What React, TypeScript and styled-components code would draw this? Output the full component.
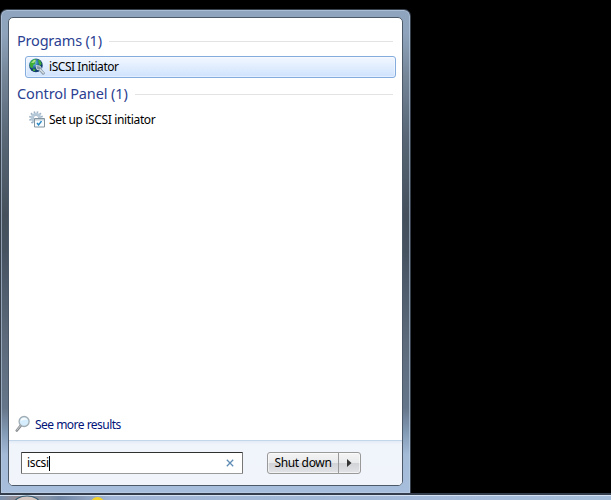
import React from "react";
import styled, { createGlobalStyle } from "styled-components";

const Global = createGlobalStyle`
  * { box-sizing: border-box; }
  html, body { margin: 0; background: #000; overflow: hidden; }
  body { font-family: "Noto Sans", "Open Sans", sans-serif; font-size: 12px; color: #000; }
`;

const Desktop = styled.div`
  width: 611px;
  height: 500px;
  padding-top: 9px;
  display: flex;
  flex-direction: column;
  background: #000;
`;

const MenuFrame = styled.div`
  width: 411px;
  height: 484px;
  padding: 7px 7px 6px;
  border: 1px solid #36404c;
  border-bottom: 0;
  border-radius: 7px 7px 0 0;
  box-shadow: inset 0 0 0 1px rgba(190, 207, 226, .6);
  background: linear-gradient(#8fa5bf 0, #8ea3bb 24px, #758699 65px, #596776 125px, #45505c 205px, #465260 240px, #5c6a7b 330px, #66768a 398px, #829ab4 422px, #a3bbd7 445px, #a7bfdc 100%);
`;

const MenuPanel = styled.div`
  height: 469px;
  display: flex;
  flex-direction: column;
  overflow: hidden;
  border: 1px solid #4c5968;
  border-radius: 5px;
  background: #fff;
`;

const Results = styled.main`
  height: 422px;
  padding: 13px 7px 0 8px;
  display: flex;
  flex-direction: column;
`;

const GroupHeading = styled.h2<{ $spacing: string }>`
  height: 20px;
  margin: 0;
  padding-right: 2px;
  display: flex;
  align-items: center;
  gap: 7px;
  color: #2c3f92;
  font-size: 14.5px;
  font-weight: 400;
  line-height: 20px;
  letter-spacing: ${(p) => p.$spacing};
  white-space: nowrap;
  &::after { content: ""; flex: 1; height: 1px; background: #e2e3e5; }
`;

const HeadingText = styled.span`
  height: 20px;
  margin-top: -2px;
`;

const ResultItem = styled.div<{ $selected?: boolean; $spacing: string }>`
  width: 371px;
  height: 22px;
  margin: 5px 0 6px 8px;
  padding-left: 3px;
  display: flex;
  align-items: center;
  gap: 4px;
  line-height: 18px;
  letter-spacing: ${(p) => p.$spacing};
  white-space: nowrap;
  border: 1px solid ${(p) => (p.$selected ? "#84acdd" : "transparent")};
  border-radius: 3px;
  background: ${(p) => (p.$selected ? "linear-gradient(#f2f7ff, #cfe3fd)" : "none")};
  box-shadow: ${(p) => (p.$selected ? "inset 0 0 0 1px rgba(255,255,255,.4)" : "none")};
`;

const MoreLink = styled.div`
  height: 20px;
  margin: auto 0 6px -2px;
  display: flex;
  align-items: center;
  gap: 4px;
  color: #00147a;
  letter-spacing: -0.52px;
`;

const Footer = styled.footer`
  flex: 1;
  padding: 11px 0 0 12px;
  display: flex;
  align-items: flex-start;
  gap: 24px;
  border-top: 1px solid #c4d6e9;
  background: linear-gradient(#e2eaf5 0, #f0f4fb 3px, #f1f4fb 100%);
`;

const SearchBox = styled.div`
  width: 222px;
  height: 22px;
  padding: 0 8px 0 5px;
  display: flex;
  align-items: center;
  border: 1px solid #9a9a9a;
  border-top-color: #303030;
  border-left-color: #666;
  border-right-color: #777;
  border-radius: 1px;
  background: #fff;
`;

const Query = styled.span`
  line-height: 16px;
  letter-spacing: -0.35px;
`;

const Caret = styled.i`
  width: 1px;
  height: 15px;
  background: #000;
`;

const ClearIcon = styled.svg`
  margin-left: auto;
`;

const SplitButton = styled.div`
  width: 94px;
  height: 22px;
  display: flex;
  border: 1px solid #999;
  border-radius: 3px;
  background: linear-gradient(#f4f4f5 0, #e9eaeb 48%, #d2d4d7 52%, #e2e3e6 100%);
  box-shadow: inset 0 0 0 1px rgba(255,255,255,.55);
`;

const ShutDown = styled.div`
  width: 71px;
  border-right: 1px solid #999;
  text-align: center;
  line-height: 20px;
  letter-spacing: -0.35px;
  white-space: nowrap;
`;

const ArrowPart = styled.div`
  flex: 1;
  display: flex;
  align-items: center;
  justify-content: center;
`;

const Taskbar = styled.div`
  height: 7px;
  padding-left: 14px;
  display: flex;
  gap: 51px;
  overflow: hidden;
  border-top: 2px solid #343d4b;
  background:
    linear-gradient(#d4e2f4, #d4e2f4) 0 0 / 100% 1px no-repeat,
    linear-gradient(90deg, #7990ad 0, #958b91 17px, #8494aa 48px, #7187a5 60px, #879bb9 80px, #a1b6d6 112px, #a7bedb 100%);
`;

function GlobeIcon() {
  return (
    <svg width="16" height="18" viewBox="0 0 16 18">
      <defs>
        <radialGradient id="globe" cx=".35" cy=".3">
          <stop offset="0" stopColor="#b8e1f5" />
          <stop offset=".45" stopColor="#438fc4" />
          <stop offset="1" stopColor="#123c72" />
        </radialGradient>
      </defs>
      <circle cx="6.9" cy="7.4" r="6.8" fill="url(#globe)" />
      <path d="M.8 8C.5 4 2.6 1.8 5.5.9l2 .8-1.4 2.1.3 2.1-2.2.8-.6 3.5-1.6-.4ZM9 1.5l2.2 1 1.5 3.2-1.5 2-1.4-1.6ZM4 10.5l2.6.7-.7 2-2-.5Z" fill="#3dad36" />
      <path d="m2 5 3-3.2 2 .5-2 2.5Z" fill="#b1e58c" />
      <path d="m7 7.5 4 .5 1.5 2.3-1.4 1.8-3.2-.7Z" fill="#8398a5" stroke="#dfe8ed" strokeWidth=".8" />
      <path d="m11.5 12 2.8 3.2" stroke="#8497a4" strokeWidth="3" strokeLinecap="round" />
      <path d="m11.3 11.7 2.9 3.1" stroke="#d2dce2" strokeWidth="1.6" strokeLinecap="round" />
    </svg>
  );
}

function SettingsIcon() {
  return (
    <svg width="16" height="18" viewBox="0 0 16 18">
      <circle cx="7" cy="7" r="5.9" fill="none" stroke="#9cb1c4" strokeWidth="2" strokeDasharray="1.55 1.54" />
      <circle cx="7" cy="7" r="4" fill="none" stroke="#b4c8d8" strokeWidth="2.6" />
      <circle cx="7" cy="7" r="2.6" fill="#fff" stroke="#8fa8bd" strokeWidth=".7" />
      <path d="M5.5 7.5h10v8.5h-10Z" fill="#f8fbfd" stroke="#83939f" />
      <path d="M6 8h9v1.6H6Z" fill="#c3d0d8" />
      <path d="m8 12 1.6 1.9 2.9-3.8" fill="none" stroke="#2586c4" strokeWidth="1.5" />
    </svg>
  );
}

function MagnifierIcon() {
  return (
    <svg width="16" height="18" viewBox="0 0 16 18">
      <path d="m1.8 15.5 4.4-5.3" stroke="#85898c" strokeWidth="2.6" strokeLinecap="round" />
      <path d="m1.8 15.1 4-4.7" stroke="#d1d3d4" strokeWidth="1" strokeLinecap="round" />
      <circle cx="9.1" cy="6.5" r="5" fill="#d5edfc" stroke="#a1adb5" strokeWidth="1.3" />
      <path d="M5.5 6C6 2 11 2 12.6 5 10 4.5 8.5 5 5.5 6" fill="#fff" opacity=".8" />
    </svg>
  );
}

export default function App() {
  return (
    <>
      <Global />
      <Desktop>
        <MenuFrame>
          <MenuPanel>
            <Results>
              <GroupHeading $spacing="-0.2px"><HeadingText>Programs (1)</HeadingText></GroupHeading>
              <ResultItem $selected $spacing="-0.45px"><GlobeIcon />iSCSI Initiator</ResultItem>
              <GroupHeading $spacing="-0.12px"><HeadingText>Control Panel (1)</HeadingText></GroupHeading>
              <ResultItem $spacing="-0.35px"><SettingsIcon />Set up iSCSI initiator</ResultItem>
              <MoreLink><MagnifierIcon />See more results</MoreLink>
            </Results>
            <Footer>
              <SearchBox>
                <Query>iscsi</Query><Caret />
                <ClearIcon width="8" height="8" viewBox="0 0 8 8">
                  <path d="m.8.8 6.4 6.4m0-6.4L.8 7.2" stroke="#5f8cb5" strokeWidth="1.3" />
                </ClearIcon>
              </SearchBox>
              <SplitButton>
                <ShutDown>Shut down</ShutDown>
                <ArrowPart>
                  <svg width="5" height="8" viewBox="0 0 5 8"><path d="M0 0v8l4.5-4Z" fill="#333" /></svg>
                </ArrowPart>
              </SplitButton>
            </Footer>
          </MenuPanel>
        </MenuFrame>
        <Taskbar>
          <svg width="26" height="5" viewBox="0 0 26 5"><ellipse cx="13" cy="9" rx="13" ry="8" fill="#d5c5c1" stroke="#365e76" strokeWidth="1.2" /></svg>
          <svg width="13" height="5" viewBox="0 0 13 5"><circle cx="6.5" cy="9" r="7" fill="#f2d22a" /></svg>
        </Taskbar>
      </Desktop>
    </>
  );
}
